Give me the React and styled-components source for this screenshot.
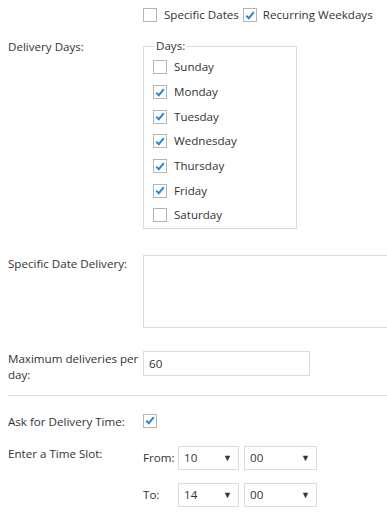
import React from "react";
import styled, { createGlobalStyle } from "styled-components";

const GlobalStyle = createGlobalStyle`
  body {
    margin: 0;
    padding: 0 0 0 8px;
    font-family: "Open Sans", "Liberation Sans", sans-serif;
    font-size: 11.6px;
    color: #333;
    background: #fff;
    overflow: hidden;
  }
`;

const Page = styled.div`
  width: 379px;
  overflow: hidden;
`;

const Row = styled.div`
  display: grid;
  grid-template-columns: 135px 1fr;
  align-items: start;
  margin-top: ${(p) => p.mt || 0}px;
`;

const Label = styled.div`
  line-height: 16px;
  padding-top: ${(p) => p.pt || 0}px;
`;

const Inline = styled.div`
  display: flex;
  align-items: center;
`;

const BoxWrap = styled.span`
  display: inline-flex;
  width: 14px;
  height: 14px;
  box-sizing: border-box;
  border: 1px solid #b5b5b5;
  background: #fff;
  align-items: center;
  justify-content: center;
  flex: none;
  margin-left: ${(p) => p.ml || 0}px;
`;

const CheckText = styled.span`
  margin-left: ${(p) => p.ml || 7}px;
  line-height: 16px;
`;

function Check({ on, ml }) {
  return (
    <BoxWrap ml={ml}>
      {on && (
        <svg width="10" height="9" viewBox="0 0 10 9">
          <path d="M1.2 4.6 L3.8 7.2 L8.8 1.2" fill="none" stroke="#2a86d4" strokeWidth="2" />
        </svg>
      )}
    </BoxWrap>
  );
}

const Fieldset = styled.fieldset`
  margin: 0;
  padding: 2px 0 0 9px;
  width: 154px;
  box-sizing: border-box;
  border: 1px solid #dcdcdc;
`;

const Legend = styled.legend`
  padding: 0 1px;
  margin-left: 2px;
  line-height: 14px;
`;

const DayRow = styled.div`
  display: flex;
  align-items: center;
  height: 24.7px;
`;

const TextArea = styled.div`
  width: 260px;
  height: 73px;
  box-sizing: border-box;
  border: 1px solid #dcdcdc;
`;

const TextInput = styled.div`
  width: 167px;
  height: 25px;
  box-sizing: border-box;
  border: 1px solid #dcdcdc;
  padding-left: 5px;
  line-height: 23px;
`;

const Divider = styled.div`
  height: 1px;
  background: #e0e0e0;
  margin-top: 12px;
`;

const SlotGrid = styled.div`
  display: grid;
  grid-template-columns: 30px 61px 73px;
  column-gap: 5px;
  row-gap: 13px;
  align-items: center;
`;

const Select = styled.div`
  display: flex;
  align-items: center;
  justify-content: space-between;
  height: 24px;
  box-sizing: border-box;
  border: 1px solid #dcdcdc;
  padding: 0 6px 0 5px;
`;

const Arrow = styled.span`
  font-size: 9px;
  color: #333;
`;

const days = [
  ["Sunday", false],
  ["Monday", true],
  ["Tuesday", true],
  ["Wednesday", true],
  ["Thursday", true],
  ["Friday", true],
  ["Saturday", false],
];

function TimeSelect({ value }) {
  return (
    <Select>
      {value}
      <Arrow>▼</Arrow>
    </Select>
  );
}

export default function App() {
  return (
    <Page>
      <GlobalStyle />
      <Row mt={7}>
        <div />
        <Inline>
          <Check />
          <CheckText ml={7}>Specific Dates</CheckText>
          <Check on ml={4} />
          <CheckText ml={6}>Recurring Weekdays</CheckText>
        </Inline>
      </Row>

      <Row mt={16}>
        <Label>Delivery Days:</Label>
        <Fieldset>
          <Legend>Days:</Legend>
          {days.map(([d, on]) => (
            <DayRow key={d}>
              <Check on={on} />
              <CheckText ml={7}>{d}</CheckText>
            </DayRow>
          ))}
        </Fieldset>
      </Row>

      <Row mt={26}>
        <Label pt={1}>Specific Date Delivery:</Label>
        <TextArea />
      </Row>

      <Row mt={23}>
        <Label>Maximum deliveries per day:</Label>
        <TextInput>60</TextInput>
      </Row>

      <Divider />

      <Row mt={18}>
        <Label>Ask for Delivery Time:</Label>
        <Inline>
          <Check on />
        </Inline>
      </Row>

      <Row mt={16}>
        <Label>Enter a Time Slot:</Label>
        <SlotGrid>
          <span>From:</span>
          <TimeSelect value="10" />
          <TimeSelect value="00" />
          <span>To:</span>
          <TimeSelect value="14" />
          <TimeSelect value="00" />
        </SlotGrid>
      </Row>
    </Page>
  );
}
